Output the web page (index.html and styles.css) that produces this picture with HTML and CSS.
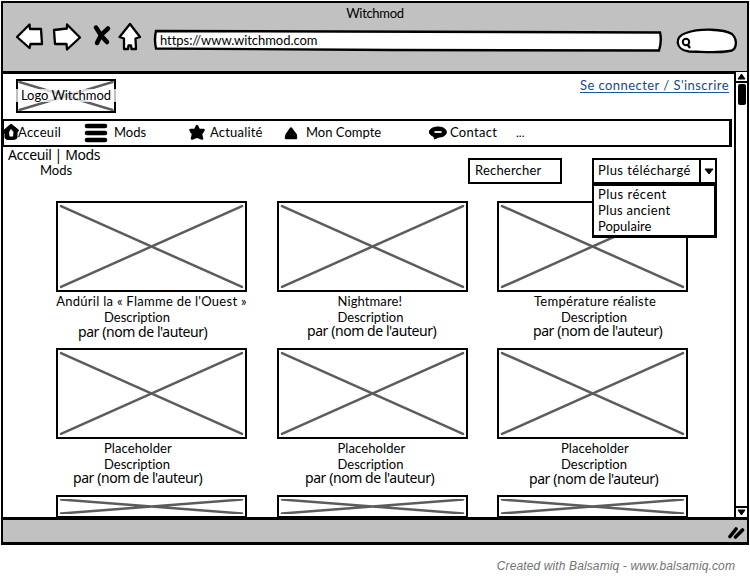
FILE: index.html
```html
<!DOCTYPE html>
<html lang="fr">
<head>
<meta charset="utf-8">
<title>Witchmod</title>
<link rel="stylesheet" href="styles.css">
</head>
<body>
<svg class="defs" width="0" height="0">
  <symbol id="cross" viewBox="0 0 187 86" preserveAspectRatio="none">
    <path d="M3 3 L184 83 M3 83 L184 3" fill="none" stroke="#5c5c5c" stroke-width="2.5" stroke-linecap="round" vector-effect="non-scaling-stroke"/>
  </symbol>
</svg>
<div class="window">
  <header class="chrome">
    <div class="title"><span>Witchmod</span></div>
    <div class="toolbar">
      <svg class="buttons" width="128" height="30" viewBox="0 0 128 30">
        <g fill="#fff" stroke="#000" stroke-width="2.3" stroke-linejoin="round">
          <path d="M2 15 L14.500 2.500 L15 7 L26 7 L27 22 L15.500 22 L14.500 26 Z"/>
          <path d="M39 8 L52 6.500 L52 2.500 L65 15.500 L52 27.500 L51.500 22 L40 22 Z"/>
          <path d="M115 2 L125 15 L120.500 16.500 L121 27 L116.500 27 L116 23.500 L113.500 23.500 L113 27 L109 27 L109 16.500 L104.500 15 Z"/>
        </g>
        <path d="M81 5.500 L86.500 14 L92 20 M93 6.500 L86 13 L82 21" fill="none" stroke="#000" stroke-width="4.500" stroke-linecap="round"/>
      </svg>
      <div class="address">
        <svg width="510" height="24" viewBox="0 0 510 24"><path d="M3 2 L507 3.500 Q509 12 506 21.500 L240 21 L3 19.500 Q1 10 3 2 Z" fill="#fff" stroke="#000" stroke-width="2.400"/></svg>
        <span>https://www.witchmod.com</span>
      </div>
      <svg class="search" width="62" height="26" viewBox="0 0 62 26">
        <path d="M13 23.500 C-1 22 -2 8 10 5 C24 0 48 1 56 6 C62 12 61 23 53 23 C40 25.500 25 23.500 13 23.500 Z" fill="#fff" stroke="#000" stroke-width="2.300"/>
        <circle cx="10" cy="14" r="3.200" fill="none" stroke="#000" stroke-width="2"/><path d="M11.500 16.500 L14 20" stroke="#000" stroke-width="2.300"/>
      </svg>
    </div>
  </header>
  <div class="viewport">
    <main class="page">
      <div class="top">
        <div class="logo"><svg><use href="#cross"/></svg><span class="logo-text"><b>Logo Witchmod</b></span></div>
        <a class="login">Se connecter / S'inscrire</a>
      </div>
      <nav class="nav">
        <span class="item home"><svg width="16" height="18" viewBox="0 0 16 18"><path d="M8 1 L15.500 7 L14 10 L14 15 Q12 17 8 16.500 Q3 17 2 15 L2 11 L0 8 Z" stroke="#000" stroke-width="1" stroke-linejoin="round"/><path d="M8 6 L10.500 9 L10 13.500 L6.500 13.500 L6 9 Z" fill="#fff"/></svg><span>Acceuil</span></span>
        <span class="item mods"><svg width="24" height="20" viewBox="0 0 24 20"><path d="M3 3 H21 M3 10 H21 M3 17 H21" stroke="#000" stroke-width="4.600" stroke-linecap="round"/></svg><span>Mods</span></span>
        <span class="item news"><svg width="16" height="17" viewBox="0 0 16 17"><path d="M8 2 L10 6 L14.500 6 L12 10 L13 14.500 L8 12.500 L3 14.500 L4 10 L1.500 6 L6 6 Z" stroke="#000" stroke-width="2.500" stroke-linejoin="round"/></svg><span>Actualité</span></span>
        <span class="item account"><svg width="14" height="14" viewBox="0 0 14 14"><path d="M7 2.500 L11.800 9 L12 12 L2 12 L2.500 9 Z" stroke="#000" stroke-width="2.500" stroke-linejoin="round"/></svg><span>Mon Compte</span></span>
        <span class="item contact"><svg width="18" height="14" viewBox="0 0 18 14"><path d="M9 1 C20 1 20 11 10 11 L5.500 13 L5 10.500 C-3 8 0 1 9 1 Z" stroke="#000" stroke-width="1"/><path d="M5.500 6 H12.500" stroke="#fff" stroke-width="1.800"/></svg><span>Contact</span></span>
        <span class="more">...</span>
      </nav>
      <div class="crumbs">Acceuil | Mods</div>
      <div class="controls">
        <h1>Mods</h1>
        <div class="field"><span>Rechercher</span></div>
        <div class="select">
          <span class="value">Plus téléchargé</span>
          <span class="arrow"><svg width="10" height="7" viewBox="0 0 10 7"><path d="M1 1 H9 L5 6 Z" stroke="#000"/></svg></span>
          <ul class="menu"><li class="recent">Plus récent</li><li class="oldest">Plus ancient</li><li>Populaire</li></ul>
        </div>
      </div>
      <div class="grid">
        <article class="c1"><svg class="thumb"><use href="#cross"/></svg><h2 class="centered wide">Andúril la « Flamme de l'Ouest »</h2><p class="desc">Description</p><p class="by a1">par (nom de l'auteur)</p></article>
        <article class="c2"><svg class="thumb"><use href="#cross"/></svg><h2>Nightmare!</h2><p class="desc">Description</p><p class="by a2">par (nom de l'auteur)</p></article>
        <article class="c3"><svg class="thumb"><use href="#cross"/></svg><h2 class="centered temp">Température réaliste</h2><p class="desc">Description</p><p class="by a3">par (nom de l'auteur)</p></article>
        <article class="c1"><svg class="thumb"><use href="#cross"/></svg><h2>Placeholder</h2><p class="desc">Description</p><p class="by a4">par (nom de l'auteur)</p></article>
        <article class="c2"><svg class="thumb"><use href="#cross"/></svg><h2>Placeholder</h2><p class="desc">Description</p><p class="by a5">par (nom de l'auteur)</p></article>
        <article class="c3"><svg class="thumb"><use href="#cross"/></svg><h2>Placeholder</h2><p class="desc">Description</p><p class="by a6">par (nom de l'auteur)</p></article>
        <svg class="thumb short"><use href="#cross"/></svg>
        <svg class="thumb short"><use href="#cross"/></svg>
        <svg class="thumb short"><use href="#cross"/></svg>
      </div>
    </main>
    <div class="scroll">
      <span class="step"><svg width="9" height="7" viewBox="0 0 9 7"><path d="M4.500 1 L8 6 H1 Z" stroke="#000"/></svg></span>
      <span class="track"><i></i></span>
      <span class="step down"><svg width="9" height="7" viewBox="0 0 9 7"><path d="M4.500 6 L8 1 H1 Z" stroke="#000"/></svg></span>
    </div>
  </div>
  <footer class="status"><svg width="18" height="14" viewBox="0 0 18 14"><path d="M3 10.500 L9 3 M8.500 11 L15.500 4" stroke="#000" stroke-width="3.600" stroke-linecap="round"/></svg></footer>
</div>
<p class="credit">Created with Balsamiq - www.balsamiq.com</p>
</body>
</html>
```

FILE: styles.css
```css
* { box-sizing: border-box; }
body { margin: 0; background: #fff; color: #000; font: 13px/16px Lato, "Open Sans", sans-serif; font-variant-ligatures: none; overflow: hidden; white-space: nowrap; height: 576px; }
svg { display: block; flex: none; }
.defs { position: absolute; }
h1, h2, p, ul { margin: 0; padding: 0; font-size: inherit; font-weight: 400; list-style: none; }

.window { margin: 1px 1px 0; height: 544px; border: 2px solid #000; border-bottom-width: 3px; }
.chrome { height: 71px; background: #c1c1c1; border-bottom: 3px solid #000; }
.title { text-align: center; padding-top: 2px; line-height: 17px; height: 19px; letter-spacing: -.3px; }
.toolbar { display: flex; }
.buttons { margin: 0 0 0 12px; }
.address { display: grid; margin: 7px 0 0 10px; }
.address > * { grid-area: 1 / 1; }
.address span { margin: 4px 0 0 7px; letter-spacing: -.05px; line-height: 15px; }
.search { margin: 6px 0 0 13px; }

.viewport { display: flex; height: 443px; }
.page { width: 731px; height: 443px; overflow: hidden; }
.top { display: flex; justify-content: space-between; height: 45px; padding: 5px 5px 0 13px; }
.logo { display: grid; grid-template-columns: 96px; place-items: center; width: 100px; height: 34px; border: 2px solid #000; }
.logo > * { grid-area: 1 / 1; }
.logo svg { width: 96px; height: 30px; }
.logo-text { width: 100px; margin: -2px -2px 0; text-align: center; background: rgba(255, 255, 255, .75); line-height: 13px; }
.logo-text b { font-weight: 400; letter-spacing: -.05px; }
.login { height: 15px; margin-top: -1px; line-height: 14px; border-bottom: 1px solid #1a5795; color: #164a87; letter-spacing: .45px; }

.nav { display: flex; width: 730px; height: 28px; margin-left: -1px; border: 2px solid #000; border-right-width: 3px; }
.item { display: flex; align-items: center; height: 23px; }
.item > span { margin-top: -2px; }
.home { width: 81px; margin-left: -1px; }
.home svg { margin: -2px -1px 0 0; }
.home span { letter-spacing: .3px; }
.mods { width: 105px; }
.mods svg { margin-right: 6px; }
.news { width: 95px; }
.news svg { margin-right: 5px; }
.news span { letter-spacing: .2px; }
.account { width: 145px; }
.account svg { margin-right: 8px; }
.contact { width: 86px; }
.contact svg { margin-right: 3px; }
.contact span { letter-spacing: .3px; }
.more { line-height: 24px; font-size: 12px; margin-left: 1px; }

.crumbs { height: 15px; padding-left: 5px; font: 14px/16px "Noto Sans", "Open Sans", sans-serif; letter-spacing: -.4px; }
.controls { display: flex; align-items: flex-start; height: 39px; padding-left: 37px; }
.controls h1 { width: 428px; line-height: 17px; }
.field { width: 94px; height: 26px; margin: -4px 30px 0 0; padding-left: 5px; border: 2px solid #000; line-height: 21px; letter-spacing: .2px; }
.select { position: relative; z-index: 1; display: flex; width: 125px; height: 26px; margin-top: -4px; border: 2px solid #000; background: #fff; line-height: 21px; }
.value { width: 107px; padding-left: 4px; border-right: 2px solid #000; letter-spacing: .42px; }
.arrow { padding: 8px 0 0 3px; }
.menu { position: absolute; left: -2px; top: 23px; width: 125px; height: 55px; padding: 0 0 0 4px; border: 3px solid #000; border-left-width: 2px; background: #fff; line-height: 16px; }
.recent { letter-spacing: .5px; }
.oldest { letter-spacing: .3px; }

.grid { display: grid; grid-template-columns: 191px 191px 191px; grid-template-rows: 147px 147px 23px; column-gap: 29.5px; padding-left: 53px; }
.thumb { width: 191px; height: 91px; border: 2px solid #000; }
.short { height: 23px; padding: 2px 0; }
article h2 { line-height: 16px; padding-top: 1px; height: 17px; letter-spacing: .1px; }
article .centered { display: flex; justify-content: center; margin: 0 -10px; }
article .wide, article .temp { letter-spacing: .28px; }
article .temp { padding-left: 5px; }
.c1 { --inset: 48px; }
.c2 { --inset: 61px; }
.c3 { --inset: 64px; }
.desc, article h2:not(.centered) { padding-left: var(--inset); }
.desc { line-height: 16px; height: 16px; }
.by { font: 14px/14px "Noto Sans", "Open Sans", sans-serif; letter-spacing: -.43px; margin-top: -1px; }
.a1 { margin-left: 22px; line-height: 15px; }
.a2 { margin-left: 30.5px; }
.a3 { margin-left: 36px; }
.a4 { margin-left: 17px; }
.a5 { margin-left: 28.5px; }
.a6 { margin-left: 32px; line-height: 15px; }

.scroll { display: flex; flex-direction: column; width: 13px; margin-top: -2px; border-left: 2px solid #000; background: #fff; }
.step { display: flex; align-items: center; justify-content: center; height: 11px; border-bottom: 2px solid #000; }
.track { flex: 1; padding: 1px 1.500px; }
.track i { display: block; width: 8px; height: 21px; border-radius: 2px; background: #000; }
.down { border-bottom: 0; border-top: 2px solid #000; }
.status { display: flex; justify-content: flex-end; height: 25px; padding: 6px 2px 0; background: #c1c1c1; border-top: 3px solid #000; }
.credit { padding: 13px 15px 0 0; text-align: right; color: #737373; font: italic 12px/16px "Liberation Sans", Arial, sans-serif; letter-spacing: .12px; }
```
